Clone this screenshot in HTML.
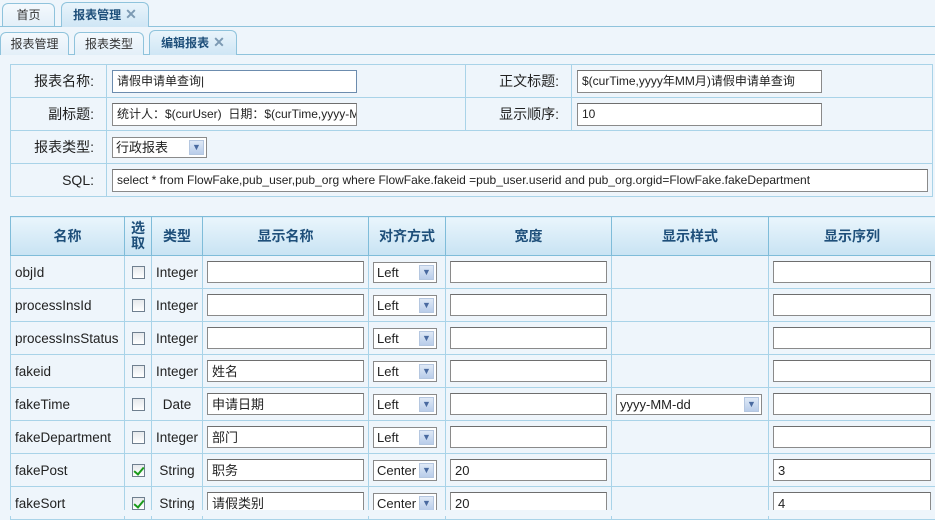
<!DOCTYPE html>
<html><head><meta charset="utf-8"><style>
*{box-sizing:border-box;margin:0;padding:0}
body{width:935px;height:516px;overflow:hidden;background:#eef5fb;font-family:"Liberation Sans","Noto Sans CJK SC",sans-serif;font-size:13px;color:#222;position:relative}
.bar{position:absolute;left:0;width:935px;border-bottom:1px solid #8fc3dc}
.tab{position:absolute;height:23px;border:1px solid #8fc3dc;border-bottom:none;border-radius:6px 6px 0 0;background:linear-gradient(#f4f9fd,#e3eff8);text-align:center;line-height:22px;font-size:12px;color:#333}
.tab.on{background:linear-gradient(#e9f4fb,#cfe6f5);font-weight:bold;color:#1e4f7a;height:25px}
.x{color:#7c9ab3;font-size:14px;margin-left:4px}
table{border-collapse:collapse;position:absolute;table-layout:fixed}
td,th{border:1px solid #a9d3e8}
.form td{height:33px;padding:0 5px}
.lbl{text-align:right;padding-right:12px!important;font-size:14px}
.inp{display:block;height:23px;border:1px solid #8a8a8a;border-top-color:#6e6e6e;background:#fff;font-size:12px;line-height:21px;padding:0 4px;white-space:nowrap;overflow:hidden}
.sel{position:relative;display:inline-block;height:21px;border:1px solid #8a8a8a;background:#fff;line-height:19px;padding:0 3px;font-size:13px;vertical-align:middle}
.sel i{position:absolute;right:2px;top:2px;width:15px;height:15px;background:linear-gradient(#dfe9f7,#b9cdea);border:1px solid #b5c7e0;font-style:normal;font-size:9px;color:#4a6aa0;text-align:center;line-height:13px}
.grid th{height:39px;background:linear-gradient(#e9f5fc,#c8e3f3);color:#1e4f7a;font-size:14px;font-weight:bold;border-color:#7fbcd9}
.grid td{height:33px;padding:0 4px;font-size:13.5px;white-space:nowrap;overflow:hidden}
.cb{display:inline-block;width:13px;height:13px;border:1px solid #6f7f8f;background:linear-gradient(#e6e9ec,#fff);vertical-align:middle;position:relative}
.cb.c::after{content:"";position:absolute;left:3px;top:0px;width:4px;height:8px;border:solid #1a9a1a;border-width:0 2px 2px 0;transform:rotate(40deg)}
.gi{height:22px;font-size:13px}
</style></head><body>
<div class="bar" style="top:0;height:27px"></div>
<div class="tab" style="left:2px;top:3px;width:53px">首页</div>
<div class="tab on" style="left:61px;top:2px;width:88px">报表管理<span class="x">✕</span></div>
<div class="bar" style="top:27px;height:28px"></div>
<div class="tab" style="left:0;top:32px;width:69px">报表管理</div>
<div class="tab" style="left:74px;top:32px;width:70px">报表类型</div>
<div class="tab on" style="left:149px;top:30px;width:88px">编辑报表<span class="x">✕</span></div>

<table class="form" style="left:10px;top:64px;width:922px">
<col style="width:96px"><col style="width:359px"><col style="width:106px"><col style="width:361px">
<tr><td class="lbl">报表名称:</td><td><span class="inp" style="width:245px;border-color:#6c8cae">请假申请单查询|</span></td><td class="lbl">正文标题:</td><td><span class="inp" style="width:245px">$(curTime,yyyy年MM月)请假申请单查询</span></td></tr>
<tr><td class="lbl">副标题:</td><td><span class="inp" style="width:245px">统计人：$(curUser)&nbsp; 日期：$(curTime,yyyy-MM-dd)</span></td><td class="lbl">显示顺序:</td><td><span class="inp" style="width:245px">10</span></td></tr>
<tr><td class="lbl">报表类型:</td><td colspan="3"><span class="sel" style="width:95px">行政报表<i>▼</i></span></td></tr>
<tr><td class="lbl">SQL:</td><td colspan="3"><span class="inp" style="width:816px">select * from FlowFake,pub_user,pub_org where FlowFake.fakeid =pub_user.userid and pub_org.orgid=FlowFake.fakeDepartment</span></td></tr>
</table>

<table class="grid" style="left:10px;top:216px;width:925px">
<col style="width:114px"><col style="width:27px"><col style="width:51px"><col style="width:166px"><col style="width:77px"><col style="width:166px"><col style="width:157px"><col style="width:167px">
<tr><th>名称</th><th style="line-height:15px">选<br>取</th><th>类型</th><th>显示名称</th><th>对齐方式</th><th>宽度</th><th>显示样式</th><th>显示序列</th></tr>
<tr><td>objId</td><td style="text-align:center"><span class="cb"></span></td><td>Integer</td><td><span class="inp gi"></span></td><td><span class="sel" style="width:64px">Left<i>▼</i></span></td><td><span class="inp gi"></span></td><td></td><td><span class="inp gi"></span></td></tr>
<tr><td>processInsId</td><td style="text-align:center"><span class="cb"></span></td><td>Integer</td><td><span class="inp gi"></span></td><td><span class="sel" style="width:64px">Left<i>▼</i></span></td><td><span class="inp gi"></span></td><td></td><td><span class="inp gi"></span></td></tr>
<tr><td>processInsStatus</td><td style="text-align:center"><span class="cb"></span></td><td>Integer</td><td><span class="inp gi"></span></td><td><span class="sel" style="width:64px">Left<i>▼</i></span></td><td><span class="inp gi"></span></td><td></td><td><span class="inp gi"></span></td></tr>
<tr><td>fakeid</td><td style="text-align:center"><span class="cb"></span></td><td>Integer</td><td><span class="inp gi">姓名</span></td><td><span class="sel" style="width:64px">Left<i>▼</i></span></td><td><span class="inp gi"></span></td><td></td><td><span class="inp gi"></span></td></tr>
<tr><td>fakeTime</td><td style="text-align:center"><span class="cb"></span></td><td style="text-align:center">Date</td><td><span class="inp gi">申请日期</span></td><td><span class="sel" style="width:64px">Left<i>▼</i></span></td><td><span class="inp gi"></span></td><td><span class="sel" style="width:146px">yyyy-MM-dd<i>▼</i></span></td><td><span class="inp gi"></span></td></tr>
<tr><td>fakeDepartment</td><td style="text-align:center"><span class="cb"></span></td><td>Integer</td><td><span class="inp gi">部门</span></td><td><span class="sel" style="width:64px">Left<i>▼</i></span></td><td><span class="inp gi"></span></td><td></td><td><span class="inp gi"></span></td></tr>
<tr><td>fakePost</td><td style="text-align:center"><span class="cb c"></span></td><td style="text-align:center">String</td><td><span class="inp gi">职务</span></td><td><span class="sel" style="width:64px">Center<i>▼</i></span></td><td><span class="inp gi">20</span></td><td></td><td><span class="inp gi">3</span></td></tr>
<tr><td>fakeSort</td><td style="text-align:center"><span class="cb c"></span></td><td style="text-align:center">String</td><td><span class="inp gi">请假类别</span></td><td><span class="sel" style="width:64px">Center<i>▼</i></span></td><td><span class="inp gi">20</span></td><td></td><td><span class="inp gi">4</span></td></tr>
</table>
<div style="position:absolute;left:0;top:510px;width:935px;height:6px;background:#eef5fb"></div>
</body></html>
